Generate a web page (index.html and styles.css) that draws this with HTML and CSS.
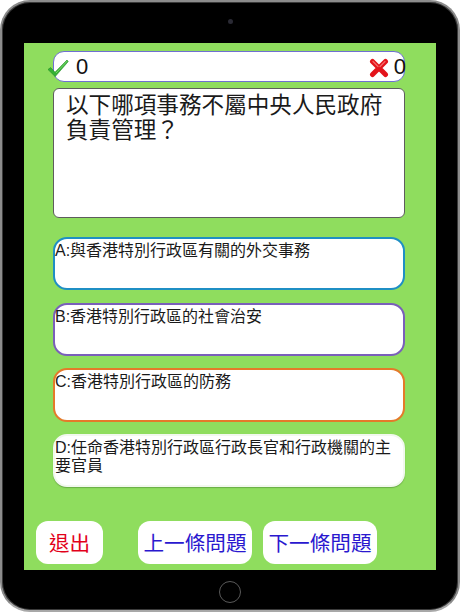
FILE: index.html
```html
<!DOCTYPE html>
<html lang="zh-Hant">
<head>
<meta charset="utf-8">
<title>Quiz</title>
<link rel="stylesheet" href="styles.css">
</head>
<body>
<div class="device">
  <div class="top-bezel"><span class="camera"></span></div>
  <div class="screen">
    <div class="score-bar">
      <svg class="icon-check" viewBox="0 0 22 20" width="22" height="20">
        <path d="M1 11.5 L3.6 9.6 L8 14.2 L20 2 L21.2 3.6 L8.2 18.6 Z" fill="#35b234" stroke="#1f8f22" stroke-width="0.6" stroke-linejoin="round"/>
        <path d="M9 15 L20.2 3" stroke="#8be07a" stroke-width="0.8" fill="none"/>
      </svg>
      <span class="score">0</span>
      <span class="spacer"></span>
      <svg class="icon-cross" viewBox="0 0 20 20" width="20" height="20">
        <path d="M3.5 3.5 L16.5 16.5 M16.5 3.5 L3.5 16.5" stroke="#e3141b" stroke-width="5" stroke-linecap="round" fill="none"/>
        <path d="M4 3.5 L9 8.5 M16 3.5 L11 8.5" stroke="#f56a6a" stroke-width="1.2" stroke-linecap="round" fill="none"/>
      </svg>
      <span class="score score-wrong">0</span>
    </div>
    <div class="question">以下哪項事務不屬中央人民政府負責管理？</div>
    <div class="option option-a">A:與香港特別行政區有關的外交事務</div>
    <div class="option option-b">B:香港特別行政區的社會治安</div>
    <div class="option option-c">C:香港特別行政區的防務</div>
    <div class="option option-d">D:任命香港特別行政區行政長官和行政機關的主要官員</div>
    <div class="buttons">
      <button class="btn btn-exit">退出</button>
      <button class="btn btn-nav btn-prev">上一條問題</button>
      <button class="btn btn-nav">下一條問題</button>
    </div>
  </div>
  <div class="bottom-bezel"><span class="home"></span></div>
</div>
</body>
</html>
```
FILE: styles.css
```css
html, body {
  margin: 0;
  padding: 0;
  background: #ffffff;
}
body {
  width: 460px;
  height: 614px;
  overflow: hidden;
  font-family: "Liberation Sans", "Noto Sans CJK TC", sans-serif;
}
.device {
  box-sizing: border-box;
  width: 460px;
  height: 612px;
  background: #000;
  border: 2px solid #8c8c8c;
  border-bottom-color: #a8a8a8;
  border-radius: 30px;
  display: flex;
  flex-direction: column;
  align-items: center;
  box-shadow: inset 0 0 0 1px #3a3a3a;
}
.top-bezel {
  height: 41px;
  width: 100%;
  display: flex;
  justify-content: center;
  align-items: center;
}
.camera {
  width: 5px;
  height: 5px;
  border-radius: 50%;
  background: #2a2a34;
  margin-top: -2px;
}
.screen {
  box-sizing: border-box;
  width: 412px;
  height: 527px;
  background: #8fdd5e;
  padding: 8px 31px 0 29px;
  display: flex;
  flex-direction: column;
}
.score-bar {
  box-sizing: border-box;
  height: 31px;
  background: #fff;
  border: 1px solid #6f6fd2;
  border-radius: 11px;
  display: flex;
  align-items: center;
}
.icon-check {
  margin-left: -7px;
  margin-top: 2px;
  flex: none;
}
.score {
  font-size: 22px;
  color: #111;
  margin-left: 7px;
  line-height: 1;
}
.spacer {
  flex: 1;
}
.icon-cross {
  flex: none;
  margin-top: 2px;
}
.score-wrong {
  margin-left: 5px;
  margin-right: -2px;
}
.question {
  box-sizing: border-box;
  margin-top: 6px;
  height: 130px;
  background: #fff;
  border: 1px solid #5d5d5d;
  border-radius: 6px;
  padding: 2px 8px 0 12px;
  font-family: "Noto Sans CJK TC", sans-serif;
  font-size: 22.6px;
  line-height: 25px;
  color: #1a1a1a;
}
.option {
  box-sizing: border-box;
  height: 53px;
  background: #fff;
  border-radius: 14px;
  border: 2px solid transparent;
  padding: 3px 2px 0 0;
  font-size: 16px;
  line-height: 18px;
  color: #1a1a1a;
  margin-top: 12px;
}
.option-a {
  margin-top: 19px;
  border-color: #1f8fc4;
}
.option-b {
  margin-top: 13px;
  border-color: #7a5fba;
}
.option-c {
  height: 54px;
  border-color: #e47a2a;
}
.option-d {
  border-color: #f2f8ee;
  box-shadow: 0 1px 1px rgba(60, 110, 40, 0.45);
}
.buttons {
  display: flex;
  align-items: center;
  margin-top: 34px;
  margin-left: -17px;
}
.btn {
  border: none;
  background: #fff;
  height: 43px;
  border-radius: 12px;
  padding: 0;
  font-family: "Noto Sans CJK TC", sans-serif;
  font-size: 20.6px;
  line-height: 43px;
}
.btn-exit {
  width: 67px;
  color: #e2001a;
}
.btn-nav {
  width: 114px;
  color: #2a18cf;
  margin-left: 11px;
}
.btn-prev {
  margin-left: 35px;
}
.bottom-bezel {
  flex: 1;
  width: 100%;
  display: flex;
  justify-content: center;
  align-items: center;
}
.home {
  box-sizing: border-box;
  width: 22px;
  height: 22px;
  border-radius: 50%;
  border: 1.5px solid #5a5a5a;
  margin-top: 4px;
}
```
